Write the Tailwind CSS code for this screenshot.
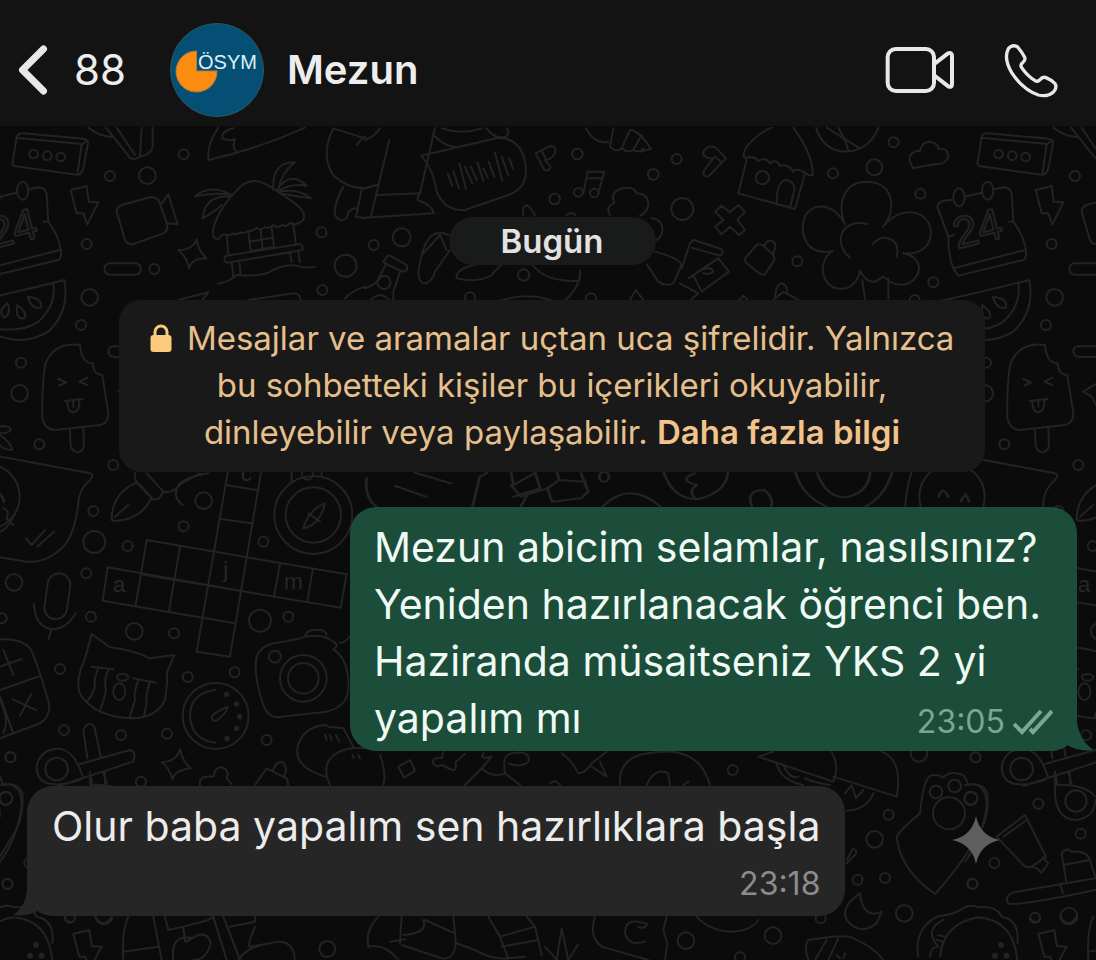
<!DOCTYPE html>
<html lang="tr">
<head>
  <meta charset="UTF-8" />
  <meta name="viewport" content="width=device-width, initial-scale=1.0" />
  <title>Mezun</title>
  <script src="https://cdn.jsdelivr.net/npm/@tailwindcss/browser@4"></script>
</head>
<body class="bg-[#0b0b0b] min-h-screen flex flex-col overflow-x-hidden font-['Inter','Liberation_Sans',sans-serif] text-[#ededed]">

  <header class="relative z-10 flex items-center bg-[#131313] pt-[23px] pb-[9px] pl-[18px] pr-[37px]">
    <a href="#" class="flex items-center gap-[26px] text-[42px] leading-none" aria-label="Geri, 88 okunmamış">
      <svg class="w-[30px] h-[50px]" viewBox="0 0 30 50" fill="none" stroke="#e8e8e8" stroke-width="7" stroke-linecap="round" stroke-linejoin="round">
        <path d="M25.500 4 L4.500 25 L25.500 46" />
      </svg>
      <span>88</span>
    </a>
    <svg class="w-[94px] h-[94px] ml-11 shrink-0" viewBox="0 0 94 94" role="img" aria-label="ÖSYM">
      <circle cx="47" cy="47" r="46.500" fill="#064f74" stroke="#2c5568" />
      <path d="M26.500 48 V28 A20.500 20.500 0 1 0 47 48 Z" fill="#fb8c10" stroke="#b87a35" />
      <text x="28" y="46" font-size="20" font-family="Liberation Sans, sans-serif" fill="#dff1f8">ÖSYM</text>
    </svg>
    <h1 class="ml-[23px] text-[40px] leading-none font-semibold">Mezun</h1>
    <div class="ml-auto flex items-center gap-12">
      <button type="button" aria-label="Görüntülü arama">
        <svg class="block w-[70px] h-[56px]" viewBox="255 126 210 168" fill="none" stroke="#e8e8e8" stroke-width="12" stroke-linecap="round" stroke-linejoin="round">
          <rect x="263" y="147" width="139" height="126" rx="24" />
          <path d="M405 190 L444 160 Q456 156 456 168 V252 Q456 264 445 259 L405 228" />
        </svg>
      </button>
      <button type="button" aria-label="Sesli arama">
        <svg class="block w-[56px] h-[56px]" viewBox="611 126 168 168" fill="none" stroke="#e8e8e8" stroke-width="10" stroke-linecap="round" stroke-linejoin="round">
          <path d="M627 146 Q640 131 655 141 Q668 156 676 172 Q679 180 671 187 Q661 194 667 203 Q685 229 707 242 Q715 247 722 239 Q730 229 740 233 Q757 240 767 251 Q774 263 763 275 Q745 292 717 285 Q670 268 637 218 Q612 175 627 146 Z" />
        </svg>
      </button>
    </div>
  </header>

  <!-- wallpaper -->
  <svg class="absolute inset-0 w-full h-full" viewBox="0 0 1096 960" preserveAspectRatio="xMidYMin slice" fill="none" stroke="#232323" stroke-width="6" stroke-linecap="round" stroke-linejoin="round" aria-hidden="true">
    <defs>
      <g id="doodles">
        <g transform="translate(0 125) scale(.3333)">
          <path d="M50 38 C52 28 58 24 70 25 L250 41 Q266 43 264 55 L250 130 Q245 150 230 149 L48 124 Q36 122 38 110 Z M48 38 L238 56 Q246 58 244 66 L232 148 M246 58 L262 46" />
          <circle cx="101" cy="87" r="13" /><circle cx="142" cy="92" r="13" /><circle cx="182" cy="96" r="13" />
          <path d="M265 8 Q300 35 335 36 M318 8 L390 98 Q400 105 410 100 L440 88 Q458 78 458 60 L458 8 M350 8 L405 90 M425 8 L420 95" />
          <path d="M655 8 Q620 60 625 105 Q780 70 915 8 M700 10 Q660 20 668 40 Q690 50 705 42 Q695 65 708 78" />
          <path d="M640 310 Q635 345 655 342 Q668 325 680 330 Q690 332 700 325 Q710 332 720 322 Q730 327 745 318 Q755 320 770 308 Q780 318 795 306 Q805 314 820 300 Q835 312 845 300 Q860 308 870 294 Q885 302 900 292 Q915 288 911 265 Q900 240 840 205 Q790 165 760 168 Q740 170 725 182 Q660 240 640 310 Z" />
          <path d="M585 215 Q630 175 695 210 Q640 200 585 215 Z M690 215 Q615 210 608 280 Q645 260 665 240 M820 195 Q815 110 885 112 Q845 140 835 195 M830 195 Q870 135 920 182 Q870 175 835 198 M835 200 Q900 190 932 220 Q890 215 840 205" />
          <path d="M680 330 L685 385 M880 298 L888 360 M745 320 L752 378 L822 366 L815 306 M749 350 L818 338 M782 315 L788 372 M680 392 L900 357 Q910 360 908 375 L690 412 Q672 415 673 400 Q674 393 680 392 M695 412 L700 458 M718 410 L722 450 M870 380 L875 412 M895 378 L900 412 M655 476 Q690 470 710 450 Q760 455 800 445 Q860 410 900 425 Q925 430 945 425" />
          <path d="M212 195 L260 183 L266 230 L295 232 L262 298 L250 265 L230 265 Z" />
          <path d="M350 260 Q350 245 365 240 L450 217 Q470 215 478 230 L502 300 Q504 318 490 325 L400 357 Q383 360 375 345 Z M485 235 L505 208 L533 298 L503 295" />
          <rect x="313" y="415" width="110" height="34" rx="17" />
          <path d="M535 375 Q580 375 590 342 Q595 380 620 400 Q575 400 567 430 Q560 395 535 375 Z" />
          <circle cx="551" cy="88" r="15" /><circle cx="330" cy="153" r="15" /><circle cx="442" cy="152" r="25" />
          <circle cx="260" cy="357" r="15" /><circle cx="463" cy="432" r="15" /><circle cx="965" cy="322" r="15" />
          <circle cx="1037" cy="422" r="33" /><circle cx="967" cy="495" r="15" /><circle cx="269" cy="517" r="25" />
          <circle cx="243" cy="600" r="15" /><circle cx="63" cy="713" r="15" /><circle cx="59" cy="805" r="25" />
          <circle cx="118" cy="958" r="15" />
          <path d="M240 660 Q160 650 135 720 Q125 790 127 880 Q135 915 165 915 L300 900 Q325 895 325 865 L307 750 Q280 750 278 715 Q245 715 240 660 Z M210 915 L212 965 Q220 982 235 982 Q250 978 252 960 L250 908 M175 762 L198 772 L178 782 M262 758 L238 770 L262 780 M195 828 L248 822 M202 828 Q202 862 222 862 Q240 858 238 824 M220 828 V845" />
          <path d="M400 664 H340 Q325 666 325 680 Q327 696 345 696 H400 M420 760 L355 800 L380 815 L400 850" />
          <path d="M535 525 L625 502 L605 528 M745 525 L880 505 Q900 505 903 525 M1035 520 Q1060 495 1095 485" />
          <path d="M0 905 Q30 900 32 915 Q25 925 0 925 M0 930 Q30 950 37 975 Q10 975 0 960" />
          <path d="M1000 10 L1095 40 M1000 10 Q960 90 1000 150 Q1040 190 1095 190 M1030 185 Q1000 240 1005 270 Q1020 295 1040 280 Q1045 250 1068 250 M1085 195 L1068 275 L1095 280 M1070 60 Q1090 35 1095 35" />
        </g>
        <g transform="translate(365 125) scale(.3333)">
          <path d="M73 45 L18 272 M210 8 L165 205 M0 190 L35 180 M35 210 L165 205 Q150 225 165 228 Q200 240 207 265 L0 278 M0 45 Q30 35 45 10" />
          <path d="M168 92 L400 38 Q470 40 482 120 Q490 190 430 210 L300 255 Q240 260 215 200 Q205 130 168 92 Z M205 30 Q240 65 270 65 M230 10 Q290 30 350 10 M365 10 Q390 45 425 35 Q435 20 425 10" />
          <path d="M248 145 L262 182 M265 138 L282 190 M283 115 L303 192 M300 125 L322 175 M318 125 L335 165 M337 112 L355 168 M355 130 L368 158 M371 110 L388 155 M390 83 L412 168 M410 95 L430 150 M432 98 L444 132" />
          <path d="M512 85 L540 70 Q570 55 572 75 Q570 100 540 106 L557 125 Q553 140 538 135 Z M530 78 L545 106" />
          <path d="M655 205 L668 140 L718 140 L700 205 M664 160 L712 160" />
          <circle cx="640" cy="202" r="13" /><circle cx="688" cy="204" r="13" />
          <path d="M663 10 Q690 60 730 50 M745 10 L735 65 Q755 85 770 70 L795 15 M770 70 Q790 85 805 75 L830 30 M805 75 Q825 85 835 70 M800 15 Q830 25 858 72 L825 80" />
          <path d="M1015 80 Q1030 55 1055 70 L1083 100 L1030 155 Q1010 155 1018 135 L1045 100 Q1010 100 1015 80 M1050 95 L1068 110" />
          <path d="M735 270 Q720 245 748 235 Q730 195 785 188 Q810 188 815 205 Q850 205 850 240 Q845 265 825 272 M860 280 Q895 285 892 320 Q888 340 875 345" />
          <path d="M250 330 Q190 300 168 400 Q150 465 175 475 Q200 475 210 440 L255 375 M175 385 L225 330 L245 375 M340 417 Q270 430 275 460 Q340 475 380 450 L410 417 M500 417 Q540 470 635 468 M645 437 Q650 480 600 527 M405 527 Q490 500 560 527 M475 270 Q470 245 485 240 Q500 250 510 272 M605 270 Q620 258 632 270" />
          <path d="M55 410 L70 390 L125 420 Q130 440 115 440 L70 420 Z M62 420 L35 470 M105 440 L85 500 L85 527 M0 490 Q30 480 50 455 M15 527 Q45 495 75 527" />
          <path d="M845 417 L880 470 Q900 485 925 475 L950 420 Q945 400 870 380 M950 430 L975 355 L985 345 L1070 372 Q1078 385 1065 392 L980 368 M970 460 L1060 400 L1092 440 L1010 500 L985 450 M945 475 L1000 505 L975 527 M1000 440 Q1040 420 1045 440 Q1035 450 1015 445 M795 525 L812 495 L835 525" />
          <circle cx="637" cy="87" r="16" /><circle cx="569" cy="222" r="16" /><circle cx="935" cy="102" r="15" />
          <circle cx="865" cy="148" r="16" /><circle cx="952" cy="252" r="33" /><circle cx="110" cy="337" r="27" />
          <circle cx="26" cy="360" r="15" /><circle cx="476" cy="450" r="17" /><circle cx="57" cy="472" r="20" />
          <circle cx="315" cy="517" r="15" /><circle cx="678" cy="520" r="15" />
        </g>
        <g transform="translate(730 125) scale(.3333)">
          <path d="M190 8 Q250 90 248 150 L235 150 Q200 125 190 140 Q175 115 150 122 Q140 100 120 115 Q105 95 85 108 Q70 90 45 100 Q35 90 50 65 Q90 20 125 8 M50 105 L25 205 L195 252 L225 145 M140 235 Q140 165 170 165 Q195 170 193 195 L180 248" />
          <circle cx="97" cy="158" r="20" />
          <path d="M0 262 L25 240 L45 260 L22 285 L45 315 L28 330 L0 305 L-25 328 L-45 305 L-20 285 L-45 260 L-25 242 Z" />
          <path d="M258 8 Q280 80 350 80 Q420 75 445 8 M290 8 Q340 40 390 70 M325 8 Q350 50 355 78" />
          <path d="M550 130 Q530 100 545 85 Q560 75 570 78 Q575 50 600 50 Q625 55 625 72 Q655 68 655 95 Q650 120 610 118 Z" />
          <path d="M345 298 C315 240 270 238 245 252 C210 275 212 330 235 360 Q260 388 308 378 C275 400 270 445 292 472 C310 498 355 495 368 478 Q388 460 390 437 Q410 475 435 470 L460 455 C490 485 530 485 550 465 C580 435 570 395 520 385 C570 390 600 365 603 325 C602 275 560 255 520 264 Q480 275 460 305 C505 245 485 170 410 170 C340 172 320 235 345 298 M412 298 C365 285 332 310 332 345 Q335 380 360 397 M428 358 Q450 330 480 342 Q510 355 500 395 M397 465 L405 525 M475 460 V520" />
          <path d="M45 400 L80 360 Q90 355 100 362 L130 390 Q137 400 130 410 L105 448 Q95 450 88 445 L50 415 Q43 408 45 400 M105 360 Q110 345 125 347 Q140 355 135 370 L130 385 M135 515 Q140 475 155 475 Q170 480 172 500 M130 525 L160 500 L205 525 M25 528 L40 512 L55 527" />
          <path d="M665 225 Q625 225 622 245 L655 335 Q655 420 685 452 L880 405 Q890 400 888 375 Q880 330 850 290 L845 205 Q840 188 820 187 L795 192 M705 215 L755 203 M655 335 L672 330 M835 290 L850 290 M670 430 L885 375" />
          <ellipse cx="687" cy="217" rx="17" ry="27" /><ellipse cx="773" cy="197" rx="17" ry="27" />
          <text x="682" y="372" font-size="132" font-family="Liberation Sans, sans-serif" transform="rotate(-14 682 372)">24</text>
          <path d="M600 535 Q760 500 898 465 Q915 560 850 620 Q810 645 760 645 Q690 640 640 600 M865 475 Q875 540 820 590 Q780 620 700 612" />
          <path d="M788 515 Q835 520 828 548 Q800 555 788 515 M757 540 Q790 565 777 580 Q750 585 757 540 M728 535 Q740 565 718 578 Q695 560 728 535" />
          <circle cx="491" cy="52" r="15" /><circle cx="309" cy="145" r="15" /><circle cx="433" cy="127" r="24" />
          <circle cx="571" cy="206" r="15" /><circle cx="202" cy="409" r="15" /><circle cx="610" cy="472" r="15" /><circle cx="554" cy="525" r="15" />
        </g>
        <g transform="translate(0 460) scale(.3333)">
          <path d="M-60 -22 L270 40 Q285 45 270 60 Q235 90 235 130 Q225 220 190 260 Q140 310 80 305 L-40 285 M-150 15 Q-175 60 -180 150 M78 235 L95 255 L135 210 M112 260 L162 215" />
          <circle cx="-39" cy="110" r="98" />
          <path d="M0 100 Q10 110 12 125 M0 215 Q20 210 40 170 M10 145 Q30 150 20 175 L40 195" />
          <path d="M335 180 Q335 100 410 68 L455 115 Q420 180 345 183 Z M345 170 L385 135 M405 40 Q400 60 420 75 L460 118 Q480 122 490 95 L440 40 M490 95 Q520 100 545 70 L600 40 M548 135 Q515 110 535 75 Q560 50 625 40" />
          <path d="M440 240 L1040 343 L1022 443 L424 343 M323 322 L720 392 M308 422 L705 490 M683 38 L590 575 L690 590 L783 38 M680 75 L770 90 M662 177 L755 190 M440 240 L407 435 M540 262 L507 452 M840 312 L823 405 M938 330 L922 425 M323 322 L308 422" />
          <g fill="#272727" stroke="none" font-size="68" font-family="Liberation Sans, sans-serif">
            <text x="338" y="396">a</text>
            <text x="670" y="350">j</text>
            <text x="852" y="388">m</text>
            <text x="722" y="62">c</text>
          </g>
          <circle cx="940" cy="165" r="117" /><circle cx="940" cy="165" r="83" /><circle cx="922" cy="42" r="17" />
          <path d="M975 130 Q925 150 910 205 Q960 195 975 130 M925 160 L960 185 M875 38 V66 M965 38 V50" />
          <rect x="138" y="340" width="68" height="138" rx="34" transform="rotate(8 172 409)" />
          <path d="M102 432 Q105 500 155 508 Q200 508 227 460 M155 508 L145 538" />
          <path d="M-20 540 Q60 530 90 565 Q110 600 148 735 Q150 770 120 790 L0 835 M0 690 L120 648 M0 710 L38 815 M10 570 L40 645 M0 620 L65 597 M60 768 L95 700 M38 718 L108 750 M0 720 Q30 780 10 820" />
          <path d="M275 522 Q255 600 245 620 Q225 680 245 710 Q290 770 390 775 Q470 775 495 720 Q505 650 500 640 L523 585 L450 595 Q400 570 330 562 Z M275 620 L340 628 M400 655 L468 668 M295 625 Q280 660 285 680 Q275 710 262 722 M325 630 Q310 660 318 690 Q310 730 300 750 M415 660 Q400 700 405 720 L390 770 M450 665 Q435 710 440 730 L432 768" />
          <ellipse cx="368" cy="652" rx="17" ry="10" /><ellipse cx="358" cy="695" rx="18" ry="25" />
          <circle cx="647" cy="768" r="99" />
          <path d="M645 690 Q570 700 570 768 Q575 840 645 848 M635 770 Q640 760 683 740 Q680 760 650 782 Q635 785 635 770" />
          <g fill="#232323" stroke="none">
            <circle cx="680" cy="703" r="8" /><circle cx="709" cy="732" r="8" /><circle cx="719" cy="770" r="8" /><circle cx="710" cy="806" r="8" /><circle cx="681" cy="836" r="8" />
          </g>
          <path d="M770 590 Q780 560 820 550 Q890 540 915 530 Q970 520 1000 545 Q1020 555 1000 568 Q1050 600 1045 690 Q1040 740 980 755 L830 772 Q800 770 785 720 Q760 640 770 590 Z M915 530 Q920 508 945 510 Q975 505 980 525 M1020 550 Q1040 545 1048 530" />
          <circle cx="910" cy="655" r="70" /><circle cx="910" cy="655" r="46" /><circle cx="825" cy="590" r="18" />
          <path d="M240 960 Q110 1000 110 920 Q120 865 180 866 Q225 875 248 948 M240 912 L390 870 Q410 875 400 905 L175 978 M250 810 Q265 780 283 800 L302 890 M250 810 L262 895 M272 945 L277 975 M310 938 L320 970" />
          <circle cx="170" cy="927" r="34" />
          <path d="M485 907 Q530 905 540 868 Q548 905 572 925 Q525 930 517 958 Q510 925 485 907 Z" />
          <path d="M600 975 Q595 945 640 950 Q645 920 665 922 Q690 930 680 955 L695 972 M765 975 L800 925 L860 955 L865 975 M820 930 Q830 900 850 908 Q865 925 852 950" />
          <path d="M975 950 Q880 920 893 860 Q910 800 975 795 L985 800 L1030 805 L1060 860 M990 975 Q960 910 1010 880 Q1040 860 1095 865 M975 825 L980 840 M990 825 L995 840 M1008 825 L1018 845 M1057 885 L1062 895 M1075 885 L1080 895" />
          <circle cx="340" cy="15" r="15" /><circle cx="280" cy="153" r="15" /><circle cx="283" cy="246" r="33" />
          <circle cx="383" cy="258" r="15" /><circle cx="551" cy="199" r="15" /><circle cx="611" cy="122" r="25" />
          <circle cx="790" cy="245" r="15" /><circle cx="42" cy="367" r="25" /><circle cx="259" cy="340" r="15" />
          <circle cx="273" cy="470" r="15" /><circle cx="5" cy="475" r="15" /><circle cx="403" cy="514" r="25" />
          <circle cx="522" cy="520" r="15" /><circle cx="780" cy="482" r="33" /><circle cx="865" cy="470" r="15" />
          <circle cx="180" cy="627" r="15" /><circle cx="563" cy="651" r="15" /><circle cx="704" cy="637" r="15" />
          <circle cx="192" cy="810" r="15" /><circle cx="363" cy="826" r="15" /><circle cx="501" cy="821" r="15" />
          <circle cx="31" cy="892" r="15" /><circle cx="800" cy="840" r="15" /><circle cx="423" cy="965" r="15" />
        </g>
        <g transform="translate(340 460) scale(.482 .3333)">
          <path d="M55 55 Q50 110 75 140 M115 78 L178 110 M155 38 L230 70 M275 140 L290 50 L305 38 M355 38 L360 75 L405 38 L415 85 L360 110 M355 75 L375 110 L430 85 L455 60 L510 65 M430 85 L440 125 L500 115 L515 95 L500 40 M455 60 L450 38 M390 100 L375 140 M545 140 Q600 60 665 140 M672 38 Q690 115 740 118 Q800 100 805 38 M735 40 Q700 60 740 75 Q720 95 740 118 M855 140 Q840 90 880 90 Q900 110 895 140 M945 38 Q960 110 1010 140 M1145 38 Q1130 110 1090 140 M990 40 Q1010 115 1050 112 Q1095 100 1100 38 M1242 110 Q1250 75 1262 110 M1288 125 Q1298 90 1305 125" />
          <ellipse cx="548" cy="50" rx="10" ry="15" />
        </g>
        <g transform="translate(0 730) scale(.3333)">
          <path d="M0 165 Q65 150 65 230 Q50 330 0 395" />
          <circle cx="17" cy="205" r="20" /><circle cx="22" cy="461" r="15" /><circle cx="982" cy="657" r="24" />
          <path d="M195 560 Q200 580 222 575 L225 560 M285 560 Q310 600 335 560 M220 612 L268 600 L275 648 L305 650 L270 715 L255 680 L238 680 Z" />
          <path d="M385 560 Q365 600 370 690 M370 665 L475 650 M460 560 L485 690 M495 560 L505 600 L550 590 L555 635 M520 690 Q510 610 580 625 M550 590 L625 570 L640 560 L680 690 M670 560 L720 690 M560 635 Q620 590 632 640 Q620 690 580 690 M690 590 L765 575 V560 M765 590 Q740 650 750 650 L810 640 M715 690 Q740 650 810 640 Q880 620 885 690" />
        </g>
        <g transform="translate(365 730) scale(.3333)">
          <path d="M45 75 Q65 130 55 165 M100 110 L135 90 L150 122 L118 143 Z M230 105 Q215 115 205 100 Q200 80 230 85 L235 65 M230 105 L262 120 Q275 125 272 95 L300 72 M300 165 L350 115 Q380 145 420 130 L465 165 M350 115 L380 80 Q340 90 355 70 M420 130 Q410 75 440 70 Q500 60 490 95 Q470 115 430 100 M590 70 Q620 90 640 130 Q660 130 680 100 L725 65 M680 110 L725 140 L705 95 M765 165 Q760 80 850 70 Q1000 40 1035 165 M845 165 Q870 110 910 130 L915 165 M955 165 L970 155 M555 160 Q570 145 585 165" />
          <path d="M40 560 Q0 600 10 650 Q60 640 100 690 M110 560 L105 640 M75 635 L120 628 M115 615 Q190 610 175 570 M180 570 L270 610 L265 560 M270 610 Q280 690 230 685 L110 645 M275 640 L330 660 Q380 690 430 685 L480 680 M370 560 L405 620 L430 685 M405 620 L510 590 L485 560 M510 590 L520 630 L410 650 M520 630 L530 675 M540 650 L575 690 L590 595 L610 690 L638 645 M690 560 Q670 620 710 650 L850 690 M905 560 L895 600 L907 640 L900 690 M848 580 Q840 600 820 590 M840 580 Q780 560 780 610 Q790 650 840 635 M995 560 Q1030 600 1095 605" />
          <circle cx="963" cy="632" r="25" />
        </g>
        <g transform="translate(730 690) scale(.3333)">
          <path d="M130 185 L85 200 L310 275 Q330 230 305 185 M310 260 L500 320 Q520 210 455 185 M140 220 Q150 270 220 285 M160 225 Q180 270 205 260 M225 265 Q260 280 300 285 M430 310 Q410 360 350 362 M345 310 L365 285 L378 325 L400 300" />
          <path d="M615 612 Q510 540 500 440 Q510 420 570 370 Q580 270 600 258 Q620 250 640 262 Q660 240 700 255 Q715 275 712 285 Q760 275 772 310 Q780 390 735 450 Q690 530 615 612 Z" />
          <circle cx="657" cy="370" r="48" /><circle cx="618" cy="306" r="19" /><circle cx="674" cy="288" r="19" /><circle cx="723" cy="325" r="19" />
          <path d="M975 285 Q970 390 1040 390 Q1096 380 1096 330 M975 285 Q1060 280 1096 320 M975 245 V285 M1020 245 V280" />
          <circle cx="1038" cy="333" r="32" />
          <path d="M800 440 L885 375 L948 500 L905 530 Q890 535 880 525 Z M820 440 L890 390 M905 530 L920 535 L935 548 L955 520 L938 502" />
          <path d="M835 640 Q820 615 860 605 L1096 565 M835 640 Q860 650 1096 600 M990 585 L1000 610 M1010 580 L995 490 Q1010 470 1025 485 Q1070 480 1080 510 L1096 560 M1000 525 L1080 510" />
          <path d="M390 610 Q330 650 350 690 Q390 740 440 700 L455 665 Q400 690 390 610 Z M350 510 L370 475 Q385 485 375 495 L350 520" />
          <path d="M565 800 Q550 720 620 680 Q680 670 690 660 Q720 640 745 652 Q800 645 815 680 Q870 690 862 760 M630 800 Q640 700 745 682 Q850 690 862 810 M600 800 Q600 770 625 770 Q580 720 640 690 M625 735 L645 740 M620 750 L640 755" />
          <g fill="#232323" stroke="none"><circle cx="813" cy="765" r="9" /><circle cx="795" cy="797" r="9" /><circle cx="830" cy="797" r="9" /></g>
          <path d="M235 810 Q220 770 235 750 Q350 730 370 745 Q430 770 460 810 M255 810 L290 750 M295 810 L325 745 M0 725 Q60 725 85 690 M320 795 L330 805 M345 790 L340 805" />
          <circle cx="8" cy="240" r="15" /><circle cx="567" cy="190" r="25" /><circle cx="737" cy="202" r="15" />
          <circle cx="476" cy="374" r="15" /><circle cx="434" cy="448" r="25" /><circle cx="383" cy="569" r="15" />
          <circle cx="465" cy="564" r="15" /><circle cx="523" cy="670" r="25" /><circle cx="272" cy="685" r="15" />
          <circle cx="129" cy="737" r="25" /><circle cx="30" cy="802" r="15" /><circle cx="925" cy="341" r="15" />
          <circle cx="1052" cy="431" r="15" /><circle cx="793" cy="519" r="15" /><circle cx="728" cy="582" r="15" />
          <circle cx="915" cy="683" r="15" /><circle cx="1017" cy="678" r="25" />
        </g>
      </g>
    </defs>
    <use href="#doodles" />
    <use href="#doodles" x="965" />
    <use href="#doodles" x="-965" />
    <path d="M976 816 Q980 836 1000 840 Q980 844 976 864 Q972 844 952 840 Q972 836 976 816 Z" fill="#5e5e5e" stroke="none" />
  </svg>

  <main class="relative flex flex-col gap-[35px] pt-[91px] pb-11 pl-[27px] pr-[19px]">
    <div class="self-center w-fit rounded-full bg-[#191a1a] px-[52px] py-1 text-[33px] leading-10 font-semibold text-[#e2e2e2]">Bugün</div>

    <p class="self-center w-full max-w-[866px] rounded-[22px] bg-[#191919] px-6 pt-[15px] pb-4 text-center text-[33px] leading-[47px] text-[#e6c08c]">
      <svg class="inline-block w-[22px] h-7 mr-[6px] align-[-2px]" viewBox="0 0 22 28" aria-hidden="true">
        <path d="M5 12 V8 A6 6 0 0 1 17 8 V12" fill="none" stroke="#fbca7c" stroke-width="3" />
        <rect x="0.500" y="11" width="21" height="17" rx="3" fill="#fbca7c" />
      </svg>
      Mesajlar ve aramalar uçtan uca şifrelidir. Yalnızca bu sohbetteki kişiler bu içerikleri okuyabilir, dinleyebilir veya paylaşabilir.
      <a href="#" class="font-semibold text-[#f0c48a]">Daha fazla bilgi</a>
    </p>

    <div class="relative self-end max-w-[727px] rounded-[26px] bg-[#1b4d3a] pt-3 pb-1 px-6 text-[41px] leading-[57px] text-[#eefaf3]">
      <svg class="absolute right-[-17px] bottom-0 w-11 h-11" viewBox="0 0 44 44" aria-hidden="true">
        <path d="M0 0 H27 V14 Q29 34 44 43 Q28 45 17 38 Q10 44 0 44 Z" fill="#1b4d3a" />
      </svg>
      <p class="relative">Mezun abicim selamlar, nasılsınız? Yeniden hazırlanacak öğrenci ben. Haziranda müsaitseniz YKS 2 yi yapalım mı</p>
      <div class="absolute right-6 bottom-1 flex items-center gap-2 text-[32px] leading-[50px] text-[#7ca791]">
        <time>23:05</time>
        <svg class="w-10 h-[26px]" viewBox="0 0 40 26" fill="none" stroke="#7ca791" stroke-width="4" role="img" aria-label="İletildi">
          <path d="M1 15 L9 23 L28 2 M17 20 L20 23 L39 2" />
        </svg>
      </div>
    </div>

    <div class="relative self-start max-w-[85%] rounded-[26px] bg-[#262626] pt-3 pb-1 px-[25px] text-[41px] leading-[57px] text-[#ececec]">
      <svg class="absolute left-[-14px] bottom-0 w-11 h-11" viewBox="0 0 44 44" aria-hidden="true">
        <path d="M44 0 H14 V14 Q14 34 0 43 Q16 45 26 38 Q34 44 44 44 Z" fill="#262626" />
      </svg>
      <p class="relative">Olur baba yapalım sen hazırlıklara başla</p>
      <time class="relative block text-right text-[32px] text-[#8c8c8c]">23:18</time>
    </div>
  </main>

</body>
</html>
